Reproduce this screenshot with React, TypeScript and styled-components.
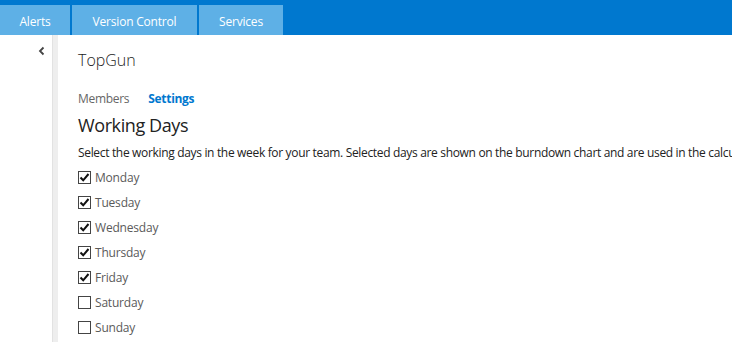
import React from "react";
import styled, { createGlobalStyle } from "styled-components";

const Global = createGlobalStyle`
  html, body { margin: 0; padding: 0; background: #fff; }
  body { font-family: "Segoe UI", "Open Sans", "Noto Sans", sans-serif; overflow: hidden; }
`;

const Page = styled.div`
  width: 732px;
  height: 342px;
  display: flex;
  flex-direction: column;
  overflow: hidden;
`;

const TopBar = styled.div`
  height: 35px;
  background: #0078cf;
  display: flex;
  align-items: flex-end;
  gap: 2px;
  flex-shrink: 0;
`;

const Tab = styled.div<{ $w: number }>`
  width: ${(p) => p.$w}px;
  height: 30px;
  background: #5eb0e6;
  color: #fff;
  font-size: 12px;
  letter-spacing: -0.2px;
  display: flex;
  align-items: center;
  justify-content: center;
  padding-top: 2px;
  box-sizing: border-box;
`;

const Body = styled.div`
  flex: 1;
  display: flex;
`;

const Side = styled.div`
  width: 52px;
  display: flex;
  justify-content: flex-end;
  padding-top: 5px;
  box-sizing: border-box;
`;

const Collapse = styled.div`
  width: 12px;
  height: 12px;
  margin-right: 4px;
`;

const Splitter = styled.div`
  width: 6px;
  background: #eeeeee;
  border-left: 1px solid #e2e2e2;
  box-sizing: border-box;
`;

const Main = styled.div`
  flex: 1;
  padding: 14px 0 0 20px;
  min-width: 0;
`;

const Title = styled.div`
  font-size: 16px;
  font-weight: 300;
  color: #222;
  line-height: 22px;
`;

const Pivots = styled.div`
  display: flex;
  gap: 19px;
  margin-top: 20px;
  font-size: 12px;
  line-height: 16px;
  letter-spacing: -0.3px;
`;

const Pivot = styled.div<{ $active?: boolean }>`
  color: ${(p) => (p.$active ? "#0078cf" : "#666")};
  font-weight: ${(p) => (p.$active ? 700 : 400)};
`;

const Heading = styled.div`
  font-size: 18px;
  font-weight: 400;
  color: #222;
  margin-top: 6px;
  line-height: 24px;
  letter-spacing: -0.4px;
`;

const Desc = styled.div`
  font-size: 12px;
  color: #222;
  white-space: nowrap;
  line-height: 16px;
  margin-top: 8px;
  letter-spacing: -0.33px;
`;

const List = styled.div`
  margin-top: 4px;
  display: flex;
  flex-direction: column;
`;

const Row = styled.div`
  height: 25px;
  display: flex;
  align-items: center;
  gap: 4px;
  font-size: 12px;
  color: #5a5a5a;
  letter-spacing: -0.2px;
`;

const Box = styled.div`
  width: 13px;
  height: 13px;
  border: 1px solid #444;
  box-sizing: border-box;
  display: flex;
  align-items: center;
  justify-content: center;
  background: #fff;
`;

const days: [string, boolean][] = [
  ["Monday", true],
  ["Tuesday", true],
  ["Wednesday", true],
  ["Thursday", true],
  ["Friday", true],
  ["Saturday", false],
  ["Sunday", false],
];

export default function App() {
  return (
    <Page>
      <Global />
      <TopBar>
        <Tab $w={70}>Alerts</Tab>
        <Tab $w={125}>Version Control</Tab>
        <Tab $w={84}>Services</Tab>
      </TopBar>
      <Body>
        <Side>
          <Collapse>
            <svg width="12" height="12" viewBox="0 0 12 12">
              <path d="M7.5 2.5 L4 6 L7.5 9.5" stroke="#444" strokeWidth="1.8" fill="none" />
            </svg>
          </Collapse>
        </Side>
        <Splitter />
        <Main>
          <Title>TopGun</Title>
          <Pivots>
            <Pivot>Members</Pivot>
            <Pivot $active>Settings</Pivot>
          </Pivots>
          <Heading>Working Days</Heading>
          <Desc>
            Select the working days in the week for your team. Selected days are shown on the burndown chart and are used in the calculation of capacity.
          </Desc>
          <List>
            {days.map(([d, c]) => (
              <Row key={d}>
                <Box>
                  {c && (
                    <svg width="11" height="11" viewBox="0 0 11 11">
                      <path d="M1.5 5.5 L4.2 8.3 L9.5 2" stroke="#111" strokeWidth="2" fill="none" />
                    </svg>
                  )}
                </Box>
                <span>{d}</span>
              </Row>
            ))}
          </List>
        </Main>
      </Body>
    </Page>
  );
}
